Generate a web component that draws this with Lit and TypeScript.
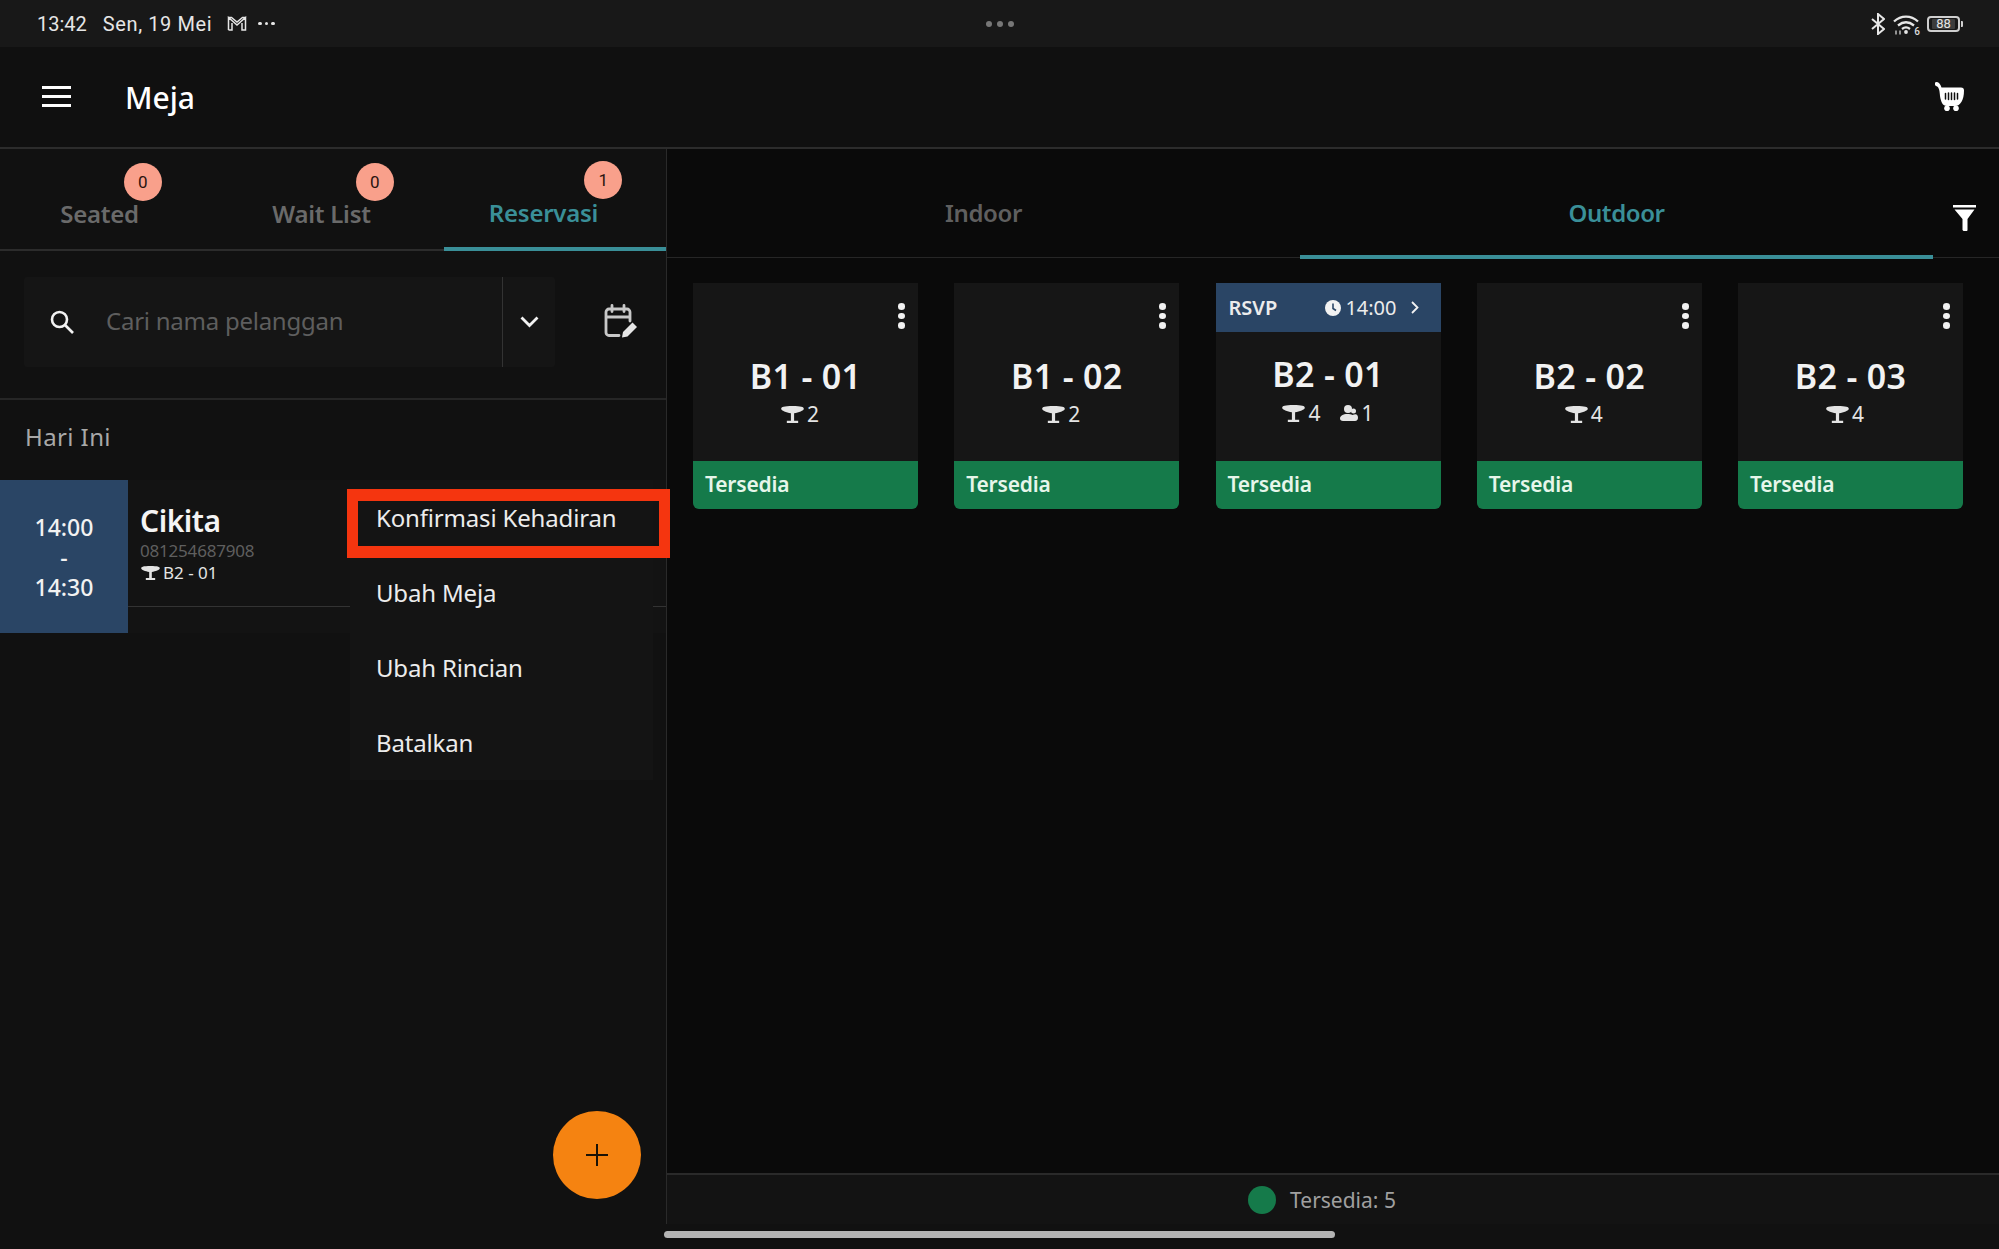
import { LitElement, html, css, svg } from "lit";
import { customElement } from "lit/decorators.js";

const tableIcon = svg`<path d="M0 3C0 1 3 0 12 0s12 1 12 3c0 2-5.500 4.200-10.300 4.600V15.500H18V18H6v-2.500h4.300V7.600C5.500 7.200 0 5 0 3z"/>`;

interface Table { name: string; seats: number; rsvp?: boolean; guests?: number }
const tables: Table[] = [
  { name: "B1 - 01", seats: 2 },
  { name: "B1 - 02", seats: 2 },
  { name: "B2 - 01", seats: 4, rsvp: true, guests: 1 },
  { name: "B2 - 02", seats: 4 },
  { name: "B2 - 03", seats: 4 },
];

@customElement("app-root")
export class AppRoot extends LitElement {
  static styles = css`
    :host {
      display: flex;
      flex-direction: column;
      width: 1999px;
      height: 1249px;
      overflow: hidden;
      background: #111;
      color: #fff;
      font-family: "Noto Sans", Roboto, sans-serif;
    }
    svg { display: block; flex: none; }

    .status {
      height: 47px;
      background: #181818;
      display: grid;
      grid-template-columns: 1fr auto 1fr;
      align-items: center;
      padding: 0 36px 0 37px;
      font-family: Roboto, sans-serif;
      font-size: 20px;
      color: #e6e6e6;
    }
    .status-left { display: flex; align-items: center; }
    .status-date { margin-left: 16px; letter-spacing: 0.6px; }
    .status-m { margin-left: 15px; }
    .status-more { margin-left: 11px; display: flex; gap: 3px; }
    .status-more i, .pager i { display: block; background: currentColor; border-radius: 50%; }
    .status-more i { width: 3.5px; height: 3.5px; }
    .pager { display: flex; gap: 5px; color: #777; }
    .pager i { width: 6px; height: 6px; }
    .status-right { display: flex; align-items: center; justify-content: flex-end; gap: 8px; }
    .wifi { position: relative; width: 26px; height: 21px; margin-top: 1px; }
    .wifi-gen { position: absolute; right: -1px; bottom: -2px; font-size: 10px; line-height: 10px; font-weight: 500; color: #ddd; }
    .battery { display: flex; align-items: center; width: 36px; height: 16px; }
    .battery-body {
      width: 33px; height: 16px; box-sizing: border-box;
      border: 2px solid #cfcfcf; border-radius: 4px;
      padding: 1px 3px;
      display: flex;
    }
    .battery-fill {
      flex: 1; background: #3c3c3c; border-radius: 1px;
      font-size: 13px; line-height: 10px; text-align: center; color: #e6e6e6; font-weight: 400;
    }
    .battery-cap { width: 2px; height: 6px; background: #cfcfcf; border-radius: 0 1px 1px 0; margin-left: 1px; }

    .header {
      height: 102px;
      box-sizing: border-box;
      background: #101010;
      border-bottom: 2px solid #2c2c2c;
      display: flex;
      align-items: center;
      padding: 0 35px 0 42px;
    }
    .burger { display: flex; flex-direction: column; gap: 6px; width: 29px; margin-top: -2px; }
    .burger i { display: block; height: 3px; background: #fff; }
    .title { margin-left: 54px; font-size: 30px; font-weight: 500; }
    .cart { margin-left: auto; margin-top: -2px; }

    .main { flex: 1; display: flex; min-height: 0; }

    .left {
      width: 666px; flex: none;
      background: #111;
      position: relative;
      z-index: 2;
      display: flex;
      flex-direction: column;
    }
    .tabs { height: 102px; box-sizing: border-box; display: grid; grid-template-columns: repeat(3, 1fr); border-bottom: 2px solid #2c2c2c; }
    .tab {
      display: flex; justify-content: center; align-items: flex-start;
      padding: 47px 23px 0 0;
      font-size: 24px; font-weight: 600; letter-spacing: -0.25px; color: #6a6a6a; line-height: 36px;
      position: relative;
      margin-bottom: -2px;
    }
    .tab-label { position: relative; }
    .tab.active { color: #3a8f98; border-bottom: 4px solid #3a8f98; padding-top: 46px; }
    .badge {
      position: absolute;
      top: -33px;
      right: -23px;
      width: 38px; height: 38px;
      border-radius: 50%;
      background: #f9a08b;
      color: #2a1410;
      font-family: Roboto, sans-serif;
      font-size: 17px; font-weight: 400; letter-spacing: 0; line-height: 38px;
      text-align: center;
    }
    .tab.active .badge { top: -34px; right: -24px; }

    .search-row {
      height: 149px; box-sizing: border-box;
      border-bottom: 2px solid #262626;
      padding: 26px 28px 0 24px;
      display: flex;
      align-items: flex-start;
    }
    .search {
      width: 534px; height: 90px;
      background: #151515;
      display: flex; align-items: center;
      border-radius: 3px;
    }
    .search-icon { margin-left: 26px; }
    .placeholder { margin: -4px 0 0 32px; flex: 1; font-size: 24px; letter-spacing: -0.25px; color: #5e5e5e; }
    .search-chevron {
      width: 53px; height: 90px; box-sizing: border-box;
      border-left: 1px solid #333;
      display: flex; align-items: center; justify-content: center;
    }
    .calendar { margin: 27px 0 0 49px; }

    .section { height: 80px; box-sizing: border-box; padding: 19px 0 0 25px; font-size: 24px; line-height: 36px; letter-spacing: 0.4px; color: #a8a8a8; }

    .row { height: 153px; display: flex; position: relative; background: #131313; }
    .time {
      width: 128px; flex: none; background: #2a4565;
      display: flex; flex-direction: column; align-items: center; justify-content: center;
      font-size: 23px; line-height: 30px; font-weight: 500; color: #f2f2f2;
    }
    .info { flex: 1; height: 127px; box-sizing: border-box; border-bottom: 1px solid #333; padding: 22px 0 0 12px; }
    .name { font-size: 30px; line-height: 38px; font-weight: 600; letter-spacing: -0.5px; color: #f4f4f4; }
    .phone { font-size: 17px; line-height: 22px; letter-spacing: -0.2px; color: #5f5f5f; }
    .where { font-size: 17px; line-height: 22px; color: #e4e4e4; display: flex; align-items: center; gap: 3px; padding-left: 1px; }
    .where svg { fill: #e4e4e4; }

    .menu {
      position: absolute; left: 350px; top: 0; width: 303px;
      background: #141414;
      z-index: 3;
      display: flex; flex-direction: column;
    }
    .menu-item { height: 75px; display: flex; align-items: center; padding-left: 26px; font-size: 24px; letter-spacing: -0.17px; color: #ececec; }
    .highlight {
      position: absolute; left: 347px; top: 9px; width: 323px; height: 69px;
      box-sizing: border-box;
      border-style: solid;
      border-color: #f5350f;
      border-width: 12px 11px;
      z-index: 4;
    }

    .fab {
      position: absolute; right: 25px; bottom: 25px;
      width: 88px; height: 88px; border-radius: 50%;
      background: #f58311;
      display: flex; align-items: center; justify-content: center;
    }

    .right {
      flex: 1; min-width: 0;
      background: #0a0a0a;
      border-left: 1px solid #2a2a2a;
      display: flex; flex-direction: column;
    }
    .rtabs { height: 109px; box-sizing: border-box; display: flex; border-bottom: 1px solid #262626; }
    .rtab {
      width: 633px; box-sizing: border-box; text-align: center;
      padding-top: 46px; font-size: 24px; line-height: 36px; font-weight: 600; letter-spacing: -0.4px; color: #5f5f5f;
      margin-bottom: -2px;
    }
    .rtab.active { color: #3a8f98; border-bottom: 4px solid #3a8f98; }
    .filter { flex: 1; display: flex; justify-content: center; padding: 56px 3px 0 0; }

    .grid {
      flex: 1;
      display: grid;
      grid-template-columns: repeat(5, 1fr);
      column-gap: 36.25px;
      align-content: start;
      padding: 25px 36px 0 26px;
    }
    .card { height: 226px; display: flex; flex-direction: column; background: #161616; border-radius: 0 0 6px 6px; overflow: hidden; }
    .card-top { height: 49px; display: flex; justify-content: flex-end; padding: 20px 13px 0 0; box-sizing: border-box; }
    .dots { display: flex; flex-direction: column; gap: 3px; }
    .dots i { display: block; width: 7px; height: 6.5px; border-radius: 50%; background: #f2f2f2; }
    .rsvp {
      height: 49px; box-sizing: border-box; background: #2a4565;
      display: flex; align-items: center; padding: 0 22px 0 13px;
      font-size: 20px; font-weight: 600; color: #ececec;
    }
    .rsvp-time { margin-left: auto; display: flex; align-items: center; gap: 4px; font-weight: 400; font-size: 20px; }
    .rsvp-chev { margin-left: 14px; }
    .card-body { flex: 1; text-align: center; padding-top: 23px; }
    .card.is-rsvp .card-body { padding-top: 21px; }
    .card-name { font-size: 34px; line-height: 42px; font-weight: 600; letter-spacing: 0.3px; color: #f2f2f2; }
    .card-meta { display: flex; justify-content: center; align-items: center; gap: 3px; font-size: 21px; line-height: 30px; color: #e4e4e4; margin-top: 2px; padding-right: 11px; }
    .card.is-rsvp .card-meta { padding-right: 0; margin-top: 3px; }
    .card-meta svg { fill: #e4e4e4; }
    .guests { margin-left: 16px; display: flex; align-items: center; gap: 4px; }
    .card-foot {
      height: 48px; box-sizing: border-box; background: #157a4a;
      display: flex; align-items: center; padding: 0 0 2px 12px;
      font-size: 21px; font-weight: 600; letter-spacing: -0.2px; color: #e6f6ea;
    }

    .legend {
      height: 51px; box-sizing: border-box;
      border-top: 2px solid #2a2a2a;
      background: #131313;
      display: flex; align-items: center; justify-content: center; gap: 14px;
      font-size: 21px; color: #a0a0a0;
      padding-right: 22px;
    }
    .legend-dot { width: 28px; height: 28px; border-radius: 50%; background: #157a4a; }

    .strip { height: 25px; display: flex; justify-content: center; padding-top: 7px; box-sizing: border-box; background: #111; }
    .home { width: 671px; height: 7px; border-radius: 4px; background: #b4b4b4; }
  `;

  render() {
    return html`
      <div class="status">
        <div class="status-left">
          <span>13:42</span>
          <span class="status-date">Sen, 19 Mei</span>
          <svg class="status-m" width="20" height="15" viewBox="0 0 20 15" fill="none" stroke="#e6e6e6" stroke-width="1.500">
            <path d="M1.500 14V1.500L10 9l8.500-7.500V14H15V7M1.500 14H5V7M1.500 1.500h3L10 6l5.500-4.500h3" />
          </svg>
          <span class="status-more"><i></i><i></i><i></i></span>
        </div>
        <div class="pager"><i></i><i></i><i></i></div>
        <div class="status-right">
          <svg width="14" height="22" viewBox="0 0 14 22" fill="none" stroke="#e6e6e6" stroke-width="2">
            <path d="M1 6l12 10-6 5V1l6 5L1 16" />
          </svg>
          <div class="wifi">
            <svg width="26" height="21" viewBox="0 0 26 21" fill="none" stroke="#e6e6e6" stroke-width="2.300">
              <path d="M1 7.500C8 1 18 1 25 7.500M5 11.500c5-4 11-4 16 0M9 15c2.500-2 5.500-2 8 0" />
              <circle cx="13" cy="18" r="1.900" fill="#e6e6e6" stroke="none"/>
              <path d="M3 20.500v-4M7 16.500v4" stroke-width="1.200"/>
            </svg>
            <span class="wifi-gen">6</span>
          </div>
          <div class="battery">
            <div class="battery-body"><div class="battery-fill">88</div></div>
            <div class="battery-cap"></div>
          </div>
        </div>
      </div>

      <div class="header">
        <div class="burger"><i></i><i></i><i></i></div>
        <div class="title">Meja</div>
        <svg class="cart" width="29" height="29" viewBox="0 0 29 29">
          <path fill="#fff" d="M1.200 0C3.800 0 5.500 2 6.500 5.500h19.500c2 0 3 1.200 3 3 0 9.500-3.500 15.500-9 15.500h-8C7.500 24 6 20 5 14 4.500 9.500 4.500 5 1 4-.5 3.500-.5 0 1.200 0z"/>
          <path stroke="#101010" stroke-width="1.500" stroke-linecap="round" d="M10.500 11.500v5.500M13.500 11v6.500M16.500 11v6.500M19.500 11v6.500M22.500 11.500v5.500"/>
          <circle cx="12" cy="26.200" r="2.800" fill="#fff"/><circle cx="21" cy="26.200" r="2.800" fill="#fff"/>
        </svg>
      </div>

      <div class="main">
        <div class="left">
          <div class="tabs">
            <div class="tab"><span class="tab-label">Seated<span class="badge">0</span></span></div>
            <div class="tab"><span class="tab-label">Wait List<span class="badge">0</span></span></div>
            <div class="tab active"><span class="tab-label">Reservasi<span class="badge">1</span></span></div>
          </div>
          <div class="search-row">
            <div class="search">
              <svg class="search-icon" width="24" height="24" viewBox="0 0 24 24" fill="none" stroke="#f2f2f2" stroke-width="2.600">
                <circle cx="9.500" cy="9.500" r="7.500"/><path d="M15 15l8 8"/>
              </svg>
              <div class="placeholder">Cari nama pelanggan</div>
              <div class="search-chevron">
                <svg width="19" height="12" viewBox="0 0 19 12" fill="none" stroke="#f2f2f2" stroke-width="2.800"><path d="M1.500 1.500l8 8 8-8"/></svg>
              </div>
            </div>
            <svg class="calendar" width="34" height="34" viewBox="0 0 34 34" fill="none" stroke="#c8c8c8" stroke-width="2.800" stroke-linecap="round">
              <path d="M15 31.500H5a3 3 0 0 1-3-3V8a3 3 0 0 1 3-3h18a3 3 0 0 1 3 3v9M2 13h24M8 1.500v6M20 1.500v6"/>
              <path d="M18 33.500l1-5.500 9.500-9.500 4.500 4.500-9.500 9.500z" fill="#e6e6e6" stroke="none"/>
            </svg>
          </div>
          <div class="section">Hari Ini</div>
          <div class="row">
            <div class="time"><span>14:00</span><span>-</span><span>14:30</span></div>
            <div class="info">
              <div class="name">Cikita</div>
              <div class="phone">081254687908</div>
              <div class="where"><svg width="19" height="14" viewBox="0 0 24 18">${tableIcon}</svg>B2 - 01</div>
            </div>
            <div class="menu">
              <div class="menu-item">Konfirmasi Kehadiran</div>
              <div class="menu-item">Ubah Meja</div>
              <div class="menu-item">Ubah Rincian</div>
              <div class="menu-item">Batalkan</div>
            </div>
            <div class="highlight"></div>
          </div>
          <div class="fab">
            <svg width="22" height="22" viewBox="0 0 22 22" stroke="#1a1206" stroke-width="2"><path d="M11 0v22M0 11h22"/></svg>
          </div>
        </div>

        <div class="right">
          <div class="rtabs">
            <div class="rtab">Indoor</div>
            <div class="rtab active">Outdoor</div>
            <div class="filter">
              <svg width="23" height="26" viewBox="0 0 23 26" fill="#fff">
                <path d="M0 0h23v2.500H0zM1.500 4.500h20L14.500 14v11c0 .6-.5 1-1 1h-3l-1-1V14z"/>
              </svg>
            </div>
          </div>
          <div class="grid">
            ${tables.map(
              (t) => html`
                <div class="card ${t.rsvp ? "is-rsvp" : ""}">
                  ${t.rsvp
                    ? html`<div class="rsvp">
                        <span>RSVP</span>
                        <span class="rsvp-time">
                          <svg width="16" height="16" viewBox="0 0 16 16">
                            <circle cx="8" cy="8" r="8" fill="#f2f2f2"/>
                            <path d="M8 3.500V8.500l3 2" fill="none" stroke="#2a4565" stroke-width="1.600"/>
                          </svg>14:00
                        </span>
                        <svg class="rsvp-chev" width="8" height="13" viewBox="0 0 8 13" fill="none" stroke="#f2f2f2" stroke-width="1.800"><path d="M1 1l5.500 5.500L1 12"/></svg>
                      </div>`
                    : html`<div class="card-top"><div class="dots"><i></i><i></i><i></i></div></div>`}
                  <div class="card-body">
                    <div class="card-name">${t.name}</div>
                    <div class="card-meta">
                      <svg width="23" height="17" viewBox="0 0 24 18">${tableIcon}</svg>
                      <span>${t.seats}</span>
                      ${t.guests
                        ? html`<span class="guests">
                            <svg width="18" height="16" viewBox="0 0 18 16">
                              <circle cx="8" cy="4" r="4"/><circle cx="13.500" cy="6" r="2.500"/>
                              <path d="M3 16C1 16 0 15 0 13.500 0 11 3 9 7.500 9c2 0 3.500.3 5 1 1-.6 2-.7 3-.7 1.500 0 2.500 1.500 2.500 3.500S17 16 15 16z"/>
                            </svg>
                            <span>${t.guests}</span>
                          </span>`
                        : ""}
                    </div>
                  </div>
                  <div class="card-foot">Tersedia</div>
                </div>
              `
            )}
          </div>
          <div class="legend"><span class="legend-dot"></span><span>Tersedia: 5</span></div>
        </div>
      </div>
      <div class="strip"><div class="home"></div></div>
    `;
  }
}
